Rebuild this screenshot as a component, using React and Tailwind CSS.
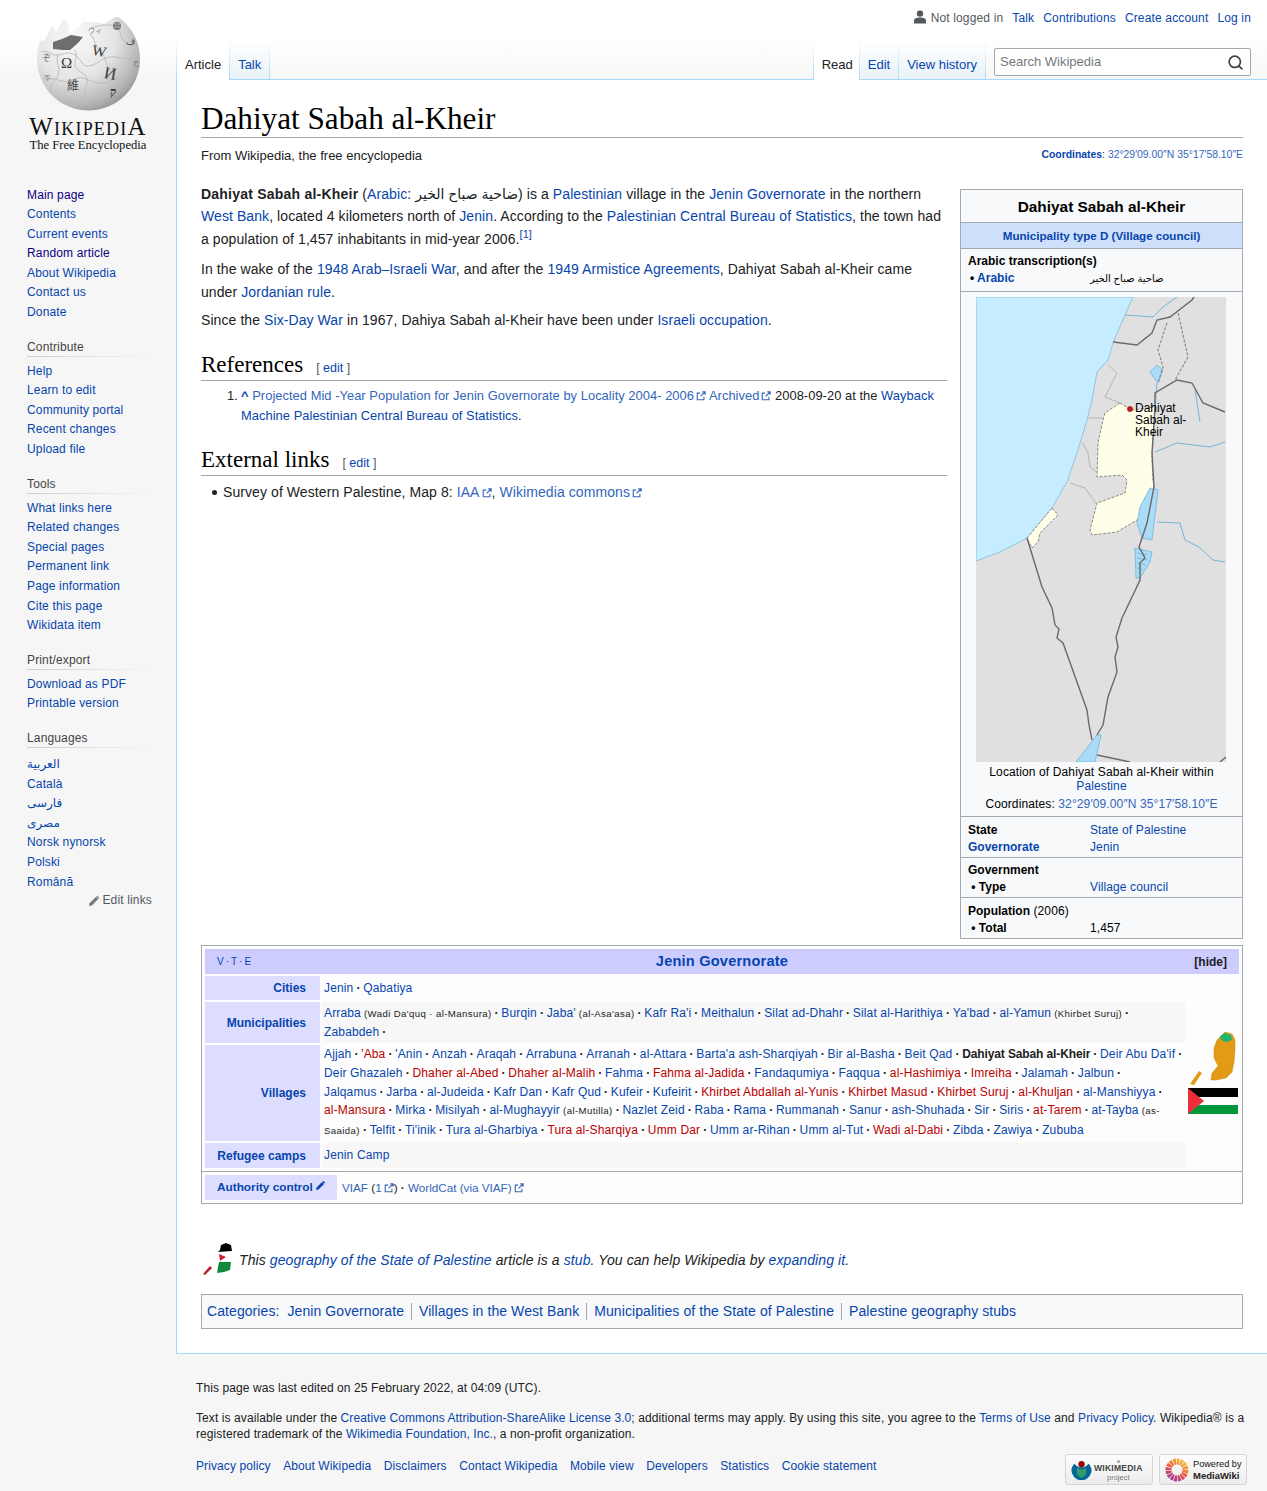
import React from "react";
import { Search } from "lucide-react";

const linkBlue = "text-[#0645ad]";
const extBlue = "text-[#3366bb]";

const sidebarSections = [
  { title: null, items: ["Main page", "Contents", "Current events", "Random article", "About Wikipedia", "Contact us", "Donate"] },
  { title: "Contribute", items: ["Help", "Learn to edit", "Community portal", "Recent changes", "Upload file"] },
  { title: "Tools", items: ["What links here", "Related changes", "Special pages", "Permanent link", "Page information", "Cite this page", "Wikidata item"] },
  { title: "Print/export", items: ["Download as PDF", "Printable version"] },
  { title: "Languages", items: ["العربية", "Català", "فارسی", "مصرى", "Norsk nynorsk", "Polski", "Română"] },
];

const visited = ["Main page", "Random article"];

// "!" = red link, "*" = current page in bold, "^" = new line before it, "|" starts the small grey note
const municipalities = ["Arraba|(Wadi Da'quq · al-Mansura)", "Burqin", "Jaba'|(al-Asa'asa)", "Kafr Ra'i", "Meithalun", "Silat ad-Dhahr", "Silat al-Harithiya", "Ya'bad", "al-Yamun|(Khirbet Suruj)", "^Zababdeh"];
const villages = ["Ajjah", "!'Aba", "'Anin", "Anzah", "Araqah", "Arrabuna", "Arranah", "al-Attara", "Barta'a ash-Sharqiyah", "Bir al-Basha", "Beit Qad", "*Dahiyat Sabah al-Kheir", "Deir Abu Da'if", "^Deir Ghazaleh", "!Dhaher al-Abed", "!Dhaher al-Malih", "Fahma", "!Fahma al-Jadida", "Fandaqumiya", "Faqqua", "!al-Hashimiya", "!Imreiha", "Jalamah", "Jalbun", "^Jalqamus", "Jarba", "al-Judeida", "Kafr Dan", "Kafr Qud", "Kufeir", "Kufeirit", "!Khirbet Abdallah al-Yunis", "!Khirbet Masud", "!Khirbet Suruj", "!al-Khuljan", "al-Manshiyya", "^!al-Mansura", "Mirka", "Misilyah", "al-Mughayyir|(al-Mutilla)", "Nazlet Zeid", "Raba", "Rama", "Rummanah", "Sanur", "ash-Shuhada", "Sir", "Siris", "!at-Tarem", "at-Tayba|(as-Saaida)", "Telfit", "Ti'inik", "Tura al-Gharbiya", "!Tura al-Sharqiya", "!Umm Dar", "Umm ar-Rihan", "Umm al-Tut", "!Wadi al-Dabi", "Zibda", "Zawiya", "Zububa"];

function A({ children, className = "" }) {
  return <a className={`${linkBlue} ${className}`}>{children}</a>;
}

function Ext({ children }) {
  return (
    <a className={extBlue}>
      {children}
      <ExtIcon />
    </a>
  );
}

function ExtIcon() {
  return (
    <svg className="inline-block ml-[2px] align-[-1px]" width="10" height="10" viewBox="0 0 12 12" fill="none" stroke="#3366bb" strokeWidth="1.3">
      <path d="M5 2.5H1.5v8h8V7" />
      <path d="M5.5 6.5 10.5 1.5M7.5 1h3.5v3.5" />
    </svg>
  );
}

function Pencil({ size = 9, color = "#0645ad" }) {
  return (
    <svg className="inline-block" width={size} height={size} viewBox="0 0 10 10" fill={color}>
      <path d="M0 10l.6-2.8L6.8 1l2.2 2.2L2.8 9.4z" />
      <path d="M7.4.4a1 1 0 0 1 1.4 0l.8.8a1 1 0 0 1 0 1.4l-.3.3L7.1.7z" />
    </svg>
  );
}

function WikiLogo() {
  return (
    <svg width="176" height="114" viewBox="0 0 176 114" className="block">
      <defs>
        <radialGradient id="globe" cx="0.36" cy="0.3" r="0.8">
          <stop offset="0" stopColor="#fafafa" />
          <stop offset="0.5" stopColor="#e4e4e4" />
          <stop offset="0.82" stopColor="#b4b4b4" />
          <stop offset="1" stopColor="#868686" />
        </radialGradient>
      </defs>
      <circle cx="88.5" cy="59" r="51.5" fill="url(#globe)" />
      {/* the missing puzzle pieces along the top */}
      <path d="M28 0H124V15L113 18 104 24 96 22 83 22 78 28 70 33 67 21 63 20 56 32 52 26 46 38 43 42 30 30z" fill="#fff" />
      <path d="M53 42 62 39 71 35 83 37 78 43 70 50 63 50 53 49z" fill="#6e6e6e" />
      <g fill="none" stroke="#b9b9b9" strokeWidth="0.9">
        <path d="M41 52c8-3 10 4 17 3s10-4 17 0 6 12 14 11 12-8 21-9 18 4 26 2" />
        <path d="M74 50c6 6-2 12 2 18s10 4 11 12-5 12-2 20" />
        <path d="M58 55c-3 8 3 12 0 20s-9 8-7 18" />
        <path d="M90 34c6 5 4 12 10 17s5 13 10 19 7 15 4 26" />
        <path d="M46 80c9-4 14 3 22 1s10-5 18-2 14 7 24 2 16-5 20-8" />
        <path d="M92 28c8-3 14-4 24-2M116 26c6 6 4 14 11 18" />
      </g>
      <g fontFamily="'Liberation Serif',serif" fill="#3a3a3a">
        <text x="61" y="68" fontSize="15">Ω</text>
        <text x="92" y="56" fontSize="15" transform="rotate(12 99 52)">W</text>
        <text x="104" y="79" fontSize="17" transform="rotate(10 110 74)">И</text>
        <text x="110" y="96" fontSize="12" fontWeight="bold">ק</text>
      </g>
      <text x="67" y="90" fontSize="12" fill="#444" fontFamily="'Noto Sans CJK SC',sans-serif">維</text>
      <text x="42" y="61" fontSize="9" fill="#777" fontFamily="'Noto Sans CJK SC',sans-serif">ぞ</text>
      <text x="44" y="81" fontSize="9" fill="#888" fontFamily="'DejaVu Sans',sans-serif">ক</text>
      <text x="133" y="65" fontSize="9" fill="#777" fontFamily="'DejaVu Sans',sans-serif">ح</text>
      <text x="126" y="45" fontSize="9" fill="#555" fontFamily="'DejaVu Sans',sans-serif">ڤ</text>
      <text x="88" y="33" fontSize="7" fill="#777" fontFamily="'Noto Sans CJK SC',sans-serif">ウィ</text>
      <circle cx="117" cy="26" r="4" fill="#777" />
      <path d="M114 24h6M114 27h6" stroke="#ddd" strokeWidth="0.6" />
    </svg>
  );
}

function Sidebar() {
  return (
    <div className="w-[176px] shrink-0 text-[12px] tracking-[0.15px]">
      <div className="h-[185.5px]">
        <div className="h-[114px]">
          <WikiLogo />
        </div>
        <div className="text-center font-['Liberation_Serif',serif] text-[#111] leading-none mt-[2px] tracking-normal">
          <div className="text-[18px] tracking-[1.2px] h-[22px] leading-[22px]">
            <span className="text-[25px]">W</span>IKIPEDI<span className="text-[25px]">A</span>
          </div>
          <div className="text-[12.6px] mt-[1px]">The Free Encyclopedia</div>
        </div>
      </div>
      {sidebarSections.map((sec) => (
        <div key={sec.items[0]} className={sec.title ? "mt-[14px]" : ""}>
          {sec.title && (
            <div
              className={`ml-[27px] mr-[24px] h-[20px] leading-[20px] text-[#444444] bg-[linear-gradient(to_right,#c8ccd1,#e6e6e6_60%,transparent)] bg-[length:100%_1px] bg-bottom bg-no-repeat ${sec.title === "Languages" ? "mb-[7px]" : "mb-[5px]"}`}
            >
              {sec.title}
            </div>
          )}
          {sec.items.map((it) => (
            <div key={it} className="pl-[27px] leading-[19.6px] h-[19.6px]">
              <a className={visited.includes(it) ? "text-[#0b0080]" : linkBlue}>{it}</a>
            </div>
          ))}
        </div>
      ))}
      <div className="pr-[24px] -mt-[2px] text-right text-[#54595d] leading-[20px]">
        <Pencil size={10} color="#72777d" /> Edit links
      </div>
    </div>
  );
}

function Tab({ children, active, tight }) {
  return (
    <div
      className={`h-[40px] pl-[8px] ${tight ? "pr-[6px]" : "pr-[8px]"} pt-[17px] text-[13px] leading-[16px] border-r border-solid [border-image:linear-gradient(to_bottom,#ffffff,#a7d7f9)_1] ${active ? "bg-white text-[#202122]" : `bg-linear-to-b from-white to-[#e8f2f8] ${linkBlue}`}`}
    >
      {children}
      {active ? null : <div className="h-px bg-[#a7d7f9] -ml-[8px] -mr-[8px] mt-[6px]" />}
    </div>
  );
}

function Header() {
  return (
    <div className="h-[80px]">
      <div className="h-[40px] flex justify-end items-start pr-[16px] pt-[9px] gap-[9px] text-[12px] tracking-[0.15px] leading-[18px]">
        <span className="h-[18px] flex items-center text-[#54595d] gap-[5px]">
          <svg width="12" height="14" viewBox="0 0 12 14" fill="#54595d" className="-mt-[3px]">
            <circle cx="6" cy="3.6" r="3.2" />
            <path d="M0 13.5V10.5c0-2 2.5-3 6-3s6 1 6 3v3z" />
          </svg>
          Not logged in
        </span>
        <A>Talk</A>
        <A>Contributions</A>
        <A>Create account</A>
        <A>Log in</A>
      </div>
      <div className="flex h-[40px]">
        <div className="flex">
          <div className="w-px [border-image:linear-gradient(to_bottom,#ffffff,#a7d7f9)_1] border-l border-solid" />
          <Tab active>Article</Tab>
          <Tab>Talk</Tab>
        </div>
        <div className="flex-1 border-b border-[#a7d7f9]" />
        <div className="flex">
          <div className="w-px [border-image:linear-gradient(to_bottom,#ffffff,#a7d7f9)_1] border-l border-solid" />
          <Tab active tight>
            Read
          </Tab>
          <Tab>Edit</Tab>
          <Tab>View history</Tab>
        </div>
        <div className="border-b border-[#a7d7f9] pl-[8px] pr-[16px] pt-[8px]">
          <div className="w-[257px] h-[28px] bg-white border border-[#a2a9b1] rounded-[2px] flex items-center justify-between pl-[5px] pr-[6px] text-[13px] text-[#72777d]">
            <span>Search Wikipedia</span>
            <Search size={17} strokeWidth={2.4} color="#404244" />
          </div>
        </div>
      </div>
    </div>
  );
}

function Map() {
  return (
    <div className="relative w-[250px] h-[465px] ml-[15px]">
      <svg width="250" height="465" viewBox="0 0 250 465" className="block">
        <rect width="250" height="465" fill="#e0e0e0" />
        <path d="M0 0H157L149 18 137 46 132 63 121 75 116 103 111 123 102 153 94 176 92 183 76 211 51 241 24 255 0 264z" fill="#c6ecff" stroke="#8ec5e0" strokeWidth="1" />
        <path d="M144 106 156 113 179 110 176 163 177 183 178 190 171 221 161 223 141 235 116 238 114 233 121 206 149 196 151 183 146 178 121 180 122 146 127 123 129 116z" fill="#fefee9" stroke="#8a8a8a" strokeWidth="1" strokeDasharray="3 1.5" />
        <path d="M76 211 82 218 64 236 62 245 56 251 51 241z" fill="#fefee9" stroke="#8a8a8a" strokeWidth="1" strokeDasharray="3 1.5" />
        <g fill="none" stroke="#b5b5b5" strokeWidth="1">
          <path d="M132 68 141 76 129 100 144 106" />
          <path d="M112 121H127" />
          <path d="M106 145 112 156 114 170 122 176" />
          <path d="M94 186 109 191 121 208" />
        </g>
        <g fill="#aadcf7" stroke="#6fb4d8" strokeWidth="0.8">
          <path d="M174 191 182 193 176 243 166 241 161 226 164 210z" />
          <path d="M174 75 181 68 187 73 182 86z" />
          <path d="M159 251 176 255 174 265 164 281 160 281z" />
          <path d="M161 256 172 258M161 261 172 263M161 266 170 268M161 271 167 273" fill="none" />
          <path d="M121 438 125 438 119 465H100z" />
        </g>
        <g fill="none" stroke="#76b3d4" strokeWidth="1">
          <path d="M149 18 177 20 187 10 201 0" />
          <path d="M181 225 204 226 209 243 223 250 237 263 249 265" />
          <path d="M219 93 224 125" />
          <path d="M179 155 201 146 234 150 249 145" />
          <path d="M181 86 179 110" />
        </g>
        <g fill="none" stroke="#6a6a6a" strokeWidth="1.4">
          <path d="M51 241 66 290 76 311 79 328 83 332 81 341 87 346 111 413 113 428 116 443" />
          <path d="M121 438 127 428 132 400 141 375 139 360 142 350 140 340 146 321 156 300 164 283 164 266 169 261 163 250 171 226 178 190 176 156 179 110 179 96 201 83 216 86 227 106 249 115" />
          <path d="M137 45 161 48 176 36 181 23 194 20 216 3 218 0" />
          <path d="M121 458 154 465" />
          <path d="M244 465 250 460" />
        </g>
        <g fill="none" stroke="#8c8c8c" strokeWidth="1.2" strokeDasharray="3 1.5">
          <path d="M191 26 182 53 187 70 182 86" />
          <path d="M202 16 212 60 199 83" />
        </g>
        <circle cx="154" cy="112" r="2.6" fill="#c8161d" stroke="#7a1014" strokeWidth="0.5" />
      </svg>
      <div className="absolute left-[159px] top-[105px] w-[60px] text-[12px] tracking-normal leading-[12px] text-black">Dahiyat Sabah al-Kheir</div>
    </div>
  );
}

function Row({ label, children, bold }) {
  return (
    <div className="flex leading-[17px]">
      <div className={`w-[129px] shrink-0 pl-[7px] ${bold ? "font-bold tracking-normal" : ""}`}>{label}</div>
      <div>{children}</div>
    </div>
  );
}

function Infobox() {
  return (
    <div className="w-[283px] ml-[13px] mt-[6px] shrink-0 self-start border border-[#a2a9b1] bg-[#f8f9fa] text-[12px] tracking-[0.12px] text-black">
      <div className="h-[33px] pt-[2px] flex items-center justify-center font-bold text-[15.4px] tracking-normal border-b border-[#a2a9b1]">Dahiyat Sabah al-Kheir</div>
      <div className="h-[26px] flex items-center justify-center font-bold text-[11.6px] tracking-normal bg-[#cedff9] border-b border-[#a2a9b1]">
        <A>Municipality type D (Village council)</A>
      </div>
      <div className="h-[43px] pt-[4px] leading-[17px] border-b border-[#a2a9b1]">
        <div className="pl-[7px] font-bold tracking-normal">Arabic transcription(s)</div>
        <div className="flex">
          <div className="w-[129px] pl-[9px] font-bold tracking-normal">
            • <A>Arabic</A>
          </div>
          <div className="text-[10px]">ضاحية صباح الخير</div>
        </div>
      </div>
      <div className="pt-[5px] h-[525px] border-b border-[#a2a9b1]">
        <Map />
        <div className="text-center leading-[14px] mt-[3px] px-[20px]">
          Location of Dahiyat Sabah al-Kheir within <A>Palestine</A>
        </div>
        <div className="text-center leading-[14px] mt-[4px]">
          Coordinates: <span className={extBlue}>32°29′09.00″N 35°17′58.10″E</span>
        </div>
      </div>
      <div className="h-[41px] pt-[5px] border-b border-[#a2a9b1]">
        <Row label="State" bold>
          <A>State of Palestine</A>
        </Row>
        <Row label={<A>Governorate</A>} bold>
          <A>Jenin</A>
        </Row>
      </div>
      <div className="h-[40px] pt-[4px] border-b border-[#a2a9b1]">
        <div className="pl-[7px] font-bold tracking-normal leading-[17px]">Government</div>
        <Row label="&nbsp;• Type" bold>
          <A>Village council</A>
        </Row>
      </div>
      <div className="h-[40px] pt-[5px]">
        <div className="pl-[7px] leading-[17px]">
          <b className="tracking-normal">Population</b> (2006)
        </div>
        <Row label="&nbsp;• Total" bold>
          1,457
        </Row>
      </div>
    </div>
  );
}

function NavItems({ items, trailing }) {
  return items.map((raw, i) => {
    const brk = raw[0] === "^";
    const [name, note] = (brk ? raw.slice(1) : raw).split("|");
    const red = name[0] === "!";
    const cur = name[0] === "*";
    const text = red || cur ? name.slice(1) : name;
    return (
      <React.Fragment key={raw}>
        {brk && <br />}
        {cur ? <b className="tracking-[-0.12px]">{text}</b> : <a className={`tracking-[0.15px] ${red ? "text-[#ba0000]" : linkBlue}`}>{text}</a>}
        {note && <span className="text-[9.6px] tracking-[0.4px]"> {note}</span>}
        {(i < items.length - 1 || trailing) && <b className="tracking-[-0.3px]">{"\u00a0· "}</b>}
      </React.Fragment>
    );
  });
}

function NavRow({ label, alt, h, lh = "leading-[19px]", children }) {
  return (
    <div className="flex gap-[2px]" style={{ height: h }}>
      <div className="w-[115px] shrink-0 bg-[#ddddff] font-bold text-right pr-[14px] flex items-center justify-end">
        <A>{label}</A>
      </div>
      <div className={`flex-1 px-[2px] flex items-center ${lh} ${alt ? "bg-[#f7f7f7]" : "bg-[#fdfdfd]"}`}>
        <div>{children}</div>
      </div>
    </div>
  );
}

function Navbox() {
  return (
    <div className="mt-[6px] border border-[#a2a9b1] bg-[#fdfdfd] text-[12px] text-[#202122]">
      <div className="p-[3px]">
        <div className="h-[25px] bg-[#ccccff] flex items-center justify-between px-[12px] relative">
          <span className={`text-[10px] tracking-[2px] ${linkBlue}`}>V·T·E</span>
          <span className={`absolute left-0 right-0 text-center font-bold text-[14.6px] tracking-[0.2px] ${linkBlue}`}>Jenin Governorate</span>
          <span className="font-bold relative">[hide]</span>
        </div>
        <div className="flex mt-[2px]">
          <div className="flex-1 min-w-0 flex flex-col gap-[2px]">
            <NavRow label="Cities" h={24}>
              <NavItems items={["Jenin", "Qabatiya"]} />
            </NavRow>
            <NavRow label="Municipalities" alt h={41}>
              <NavItems items={municipalities} trailing />
            </NavRow>
            <NavRow label="Villages" h={96} lh="leading-[18.7px]">
              <NavItems items={villages} />
            </NavRow>
            <NavRow label="Refugee camps" alt h={25}>
              <NavItems items={["Jenin Camp"]} />
            </NavRow>
          </div>
          <div className="w-[54px] shrink-0 flex flex-col items-center justify-center pl-[2px]">
            <svg width="50" height="56" viewBox="0 0 50 56" className="block">
              <path d="M2 54 11 41 14 43 6 55z" fill="#e29a17" />
              <path d="M37 2 44 4 47 10 47 20 46 32 44 42 38 48 28 50 23 50 24 43 30 36 26 28 26 18 29 10z" fill="#e29a17" stroke="#c98a10" strokeWidth="0.5" />
              <path d="M32 6 37 3 43 5 44 10 38 12 33 10z" fill="#23b56f" />
            </svg>
            <svg width="50" height="26" viewBox="0 0 50 26" className="block mt-[2px]">
              <rect width="50" height="9" fill="#000" />
              <rect y="9" width="50" height="8" fill="#fff" />
              <rect y="17" width="50" height="9" fill="#009639" />
              <path d="M0 0 16 13 0 26z" fill="#ed2e38" />
            </svg>
          </div>
        </div>
      </div>
      <div className="border-t border-[#a2a9b1] px-[3px] py-[3px] flex items-stretch">
        <div className="w-[132px] h-[25px] bg-[#ddddff] font-bold pl-[12px] flex items-center gap-[3px] text-[11.8px]">
          <A>Authority control</A>
          <span className="-mt-[4px]">
            <Pencil />
          </span>
        </div>
        <div className="pl-[5px] flex items-center text-[11.7px]">
          <span>
            <span className={extBlue}>VIAF</span> (<Ext>1</Ext>)<b> · </b>
            <Ext>WorldCat (via VIAF)</Ext>
          </span>
        </div>
      </div>
    </div>
  );
}

function StubIcon() {
  return (
    <svg width="32" height="34" viewBox="0 0 32 34" className="block shrink-0">
      <path d="M1 32 8 24 10 26 3 33z" fill="#b3202c" />
      <path d="M18 8 19 3 24 1 29 3 30 9 16 10z" fill="#000" />
      <path d="M16 10H30L29 20H17L21 17z" fill="#fff" />
      <path d="M17 12 24 15 18 19z" fill="#c8202c" />
      <path d="M17 20H29L28 28 22 30 15 31z" fill="#0f8a3c" />
    </svg>
  );
}

function Article() {
  return (
    <div className="bg-white border-l border-b border-[#a7d7f9] pt-[20px] px-[24px] pb-[24px] text-[#202122]">
      <h1 className="h-[38px] border-b border-[#a2a9b1] font-['Liberation_Serif',serif] text-[31.2px] leading-[37px] text-black">Dahiyat Sabah al-Kheir</h1>
      <div className="flex justify-between items-center h-[34px]">
        <div className="text-[13px] pt-[1px]">From Wikipedia, the free encyclopedia</div>
        <div className="text-[10.4px]">
          <a className={`font-bold ${linkBlue}`}>Coordinates</a>: <span className={extBlue}>32°29′09.00″N 35°17′58.10″E</span>
        </div>
      </div>
      <div className="flex mt-[11px]">
        <div className="flex-1 min-w-0 text-[14px] tracking-[0.08px] leading-[22.4px]">
          <p>
            <b className="tracking-[0.22px]">Dahiyat Sabah al-Kheir</b> (<A>Arabic</A>: ضاحية صباح الخير) is a <A>Palestinian</A> village in the <A>Jenin Governorate</A> in the northern <A>West Bank</A>, located 4 kilometers north of <A>Jenin</A>. According to the <A>Palestinian Central Bureau of Statistics</A>, the town had a population of 1,457 inhabitants in mid-year 2006.
            <sup className="text-[11px] leading-none">
              <A>[1]</A>
            </sup>
          </p>
          <p className="mt-[8px]">
            In the wake of the <A>1948 Arab–Israeli War</A>, and after the <A>1949 Armistice Agreements</A>, Dahiyat Sabah al-Kheir came under <A>Jordanian rule</A>.
          </p>
          <p className="mt-[6px]">
            Since the <A>Six-Day War</A> in 1967, Dahiya Sabah al-Kheir have been under <A>Israeli occupation</A>.
          </p>
          <SectionTitle title="References" />
          <div className="pl-[40px] mt-[5px] text-[12.9px] tracking-[0.04px] leading-[20px] relative">
            <span className="absolute left-[26px]">1.</span>
            <b className={linkBlue}>^</b> <Ext>Projected Mid -Year Population for Jenin Governorate by Locality 2004- 2006</Ext> <Ext>Archived</Ext> 2008-09-20 at the <A>Wayback Machine</A> <A>Palestinian Central Bureau of Statistics</A>.
          </div>
          <SectionTitle title="External links" top="mt-[19px]" />
          <div className="pl-[22px] mt-[5px] relative">
            <span className="absolute left-[11px] top-[9px] w-[5px] h-[5px] rounded-full bg-[#202122]" />
            Survey of Western Palestine, Map 8: <Ext>IAA</Ext>, <Ext>Wikimedia commons</Ext>
          </div>
        </div>
        <Infobox />
      </div>
      <Navbox />
      <div className="flex items-center gap-[5px] mt-[38px] h-[34px] pl-[1px] italic text-[14px] tracking-[0.09px]">
        <StubIcon />
        <span className="mt-[3px]">
          This <A>geography of the State of Palestine</A> article is a <A>stub</A>. You can help Wikipedia by <A>expanding it</A>.
        </span>
      </div>
      <div className="mt-[18px] h-[35px] border border-[#a2a9b1] bg-[#f8f9fa] flex items-center pl-[5px] text-[14px] tracking-[0.08px]">
        <A>Categories</A>
        <span className={linkBlue}>:&nbsp;</span>
        {["Jenin Governorate", "Villages in the West Bank", "Municipalities of the State of Palestine", "Palestine geography stubs"].map((c, i) => (
          <span key={c} className={`pr-[7px] leading-[17px] ${i ? "pl-[7px] border-l border-[#a2a9b1]" : "pl-[4px]"}`}>
            <A>{c}</A>
          </span>
        ))}
      </div>
    </div>
  );
}

function SectionTitle({ title, top = "mt-[19px]" }) {
  return (
    <div className={`${top} h-[31px] border-b border-[#a2a9b1] flex items-baseline gap-[13px] tracking-normal`}>
      <span className="font-['Liberation_Serif',serif] text-[23px] leading-[30px] text-black">{title}</span>
      <span className="text-[12.5px] text-[#54595d]">
        [ <A>edit</A> ]
      </span>
    </div>
  );
}

function Badges() {
  return (
    <div className="flex gap-[6px]">
      <div className="w-[88px] h-[31px] rounded-[3px] border border-[#d5d5d5] bg-linear-to-b from-[#fdfdfd] to-[#ececec] flex items-center pl-[5px] gap-[2px] tracking-normal">
        <svg width="21" height="21" viewBox="0 0 24 24" className="shrink-0">
          <circle cx="12" cy="6" r="3.6" fill="#990000" />
          <path d="M4 5.5a10 10 0 0 0 16 0l1.6 1.6a10.8 10.8 0 0 1-.6 12.5A11 11 0 0 1 3 19.6 10.8 10.8 0 0 1 2.4 7z" fill="#006699" />
          <path d="M8 10a6 6 0 0 0 8 0l1 1a7 7 0 0 1-4 10h-2a7 7 0 0 1-4-10z" fill="#339966" />
        </svg>
        <div className="text-center font-bold leading-none text-[#444]">
          <div className="text-[6px] font-normal text-[#777]">a</div>
          <div className="text-[8.6px] tracking-[0.2px]">WIKIMEDIA</div>
          <div className="text-[7.5px] font-normal text-[#777] mt-[1px]">project</div>
        </div>
      </div>
      <div className="w-[88px] h-[31px] rounded-[3px] border border-[#d5d5d5] bg-linear-to-b from-[#fdfdfd] to-[#ececec] flex items-center pl-[5px] gap-[4px] tracking-normal">
        <svg width="24" height="24" viewBox="0 0 24 24" className="shrink-0">
          <defs>
            <linearGradient id="mw" x1="0.8" y1="0" x2="0.2" y2="1">
              <stop offset="0" stopColor="#f7b733" />
              <stop offset="0.5" stopColor="#ef5a3c" />
              <stop offset="1" stopColor="#a83c9a" />
            </linearGradient>
          </defs>
          <circle cx="12" cy="12" r="8.5" fill="none" stroke="url(#mw)" strokeWidth="6" strokeDasharray="2.6 0.7" />
        </svg>
        <div className="leading-[11px] text-[9.2px] text-[#111]">
          <div>Powered by</div>
          <div className="font-bold text-[#222] text-[9.5px]">MediaWiki</div>
        </div>
      </div>
    </div>
  );
}

function Footer() {
  return (
    <div className="pt-[24px] pl-[20px] pr-[20px] pb-[6px] text-[12px] tracking-[0.09px] text-[#202122]">
      <div className="leading-[20px]">This page was last edited on 25 February 2022, at 04:09 (UTC).</div>
      <div className="mt-[12px] leading-[16px]">
        Text is available under the <A>Creative Commons Attribution-ShareAlike License 3.0</A>; additional terms may apply. By using this site, you agree to the <A>Terms of Use</A> and <A>Privacy Policy</A>. Wikipedia® is a registered trademark of the <A>Wikimedia Foundation, Inc.</A>, a non-profit organization.
      </div>
      <div className="flex justify-between items-start mt-[12px]">
        <div className="flex gap-[12.5px] leading-[20px] pt-[2px]">
          {["Privacy policy", "About Wikipedia", "Disclaimers", "Contact Wikipedia", "Mobile view", "Developers", "Statistics", "Cookie statement"].map((f) => (
            <A key={f}>{f}</A>
          ))}
        </div>
        <Badges />
      </div>
    </div>
  );
}

export default function App() {
  return (
    <div className="flex min-h-[1491px] font-['Liberation_Sans','DejaVu_Sans',sans-serif] bg-[#f6f6f6] bg-[linear-gradient(#ffffff_0,#ffffff_40px,#f6f6f6_80px)] bg-[length:100%_80px] bg-no-repeat">
      <Sidebar />
      <div className="flex-1 min-w-0">
        <Header />
        <Article />
        <Footer />
      </div>
    </div>
  );
}
